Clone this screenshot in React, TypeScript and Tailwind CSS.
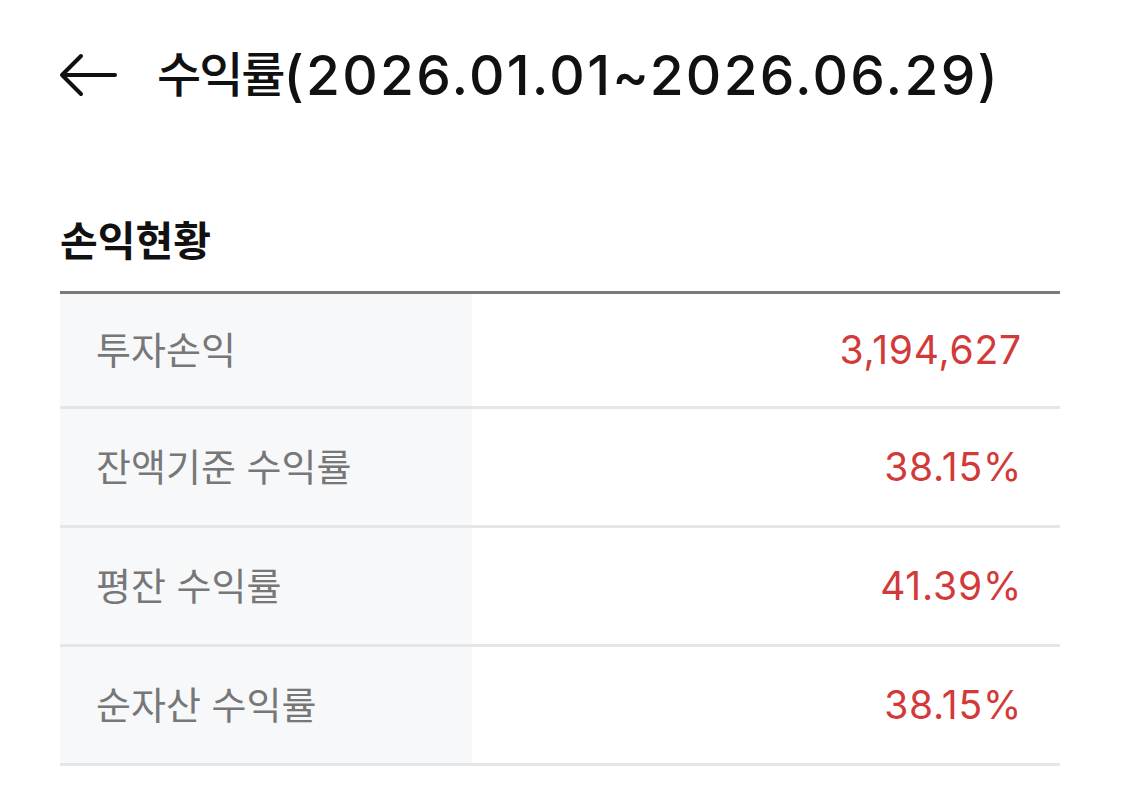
import React from 'react';

type Row = { label: string; value: string };

const rows: Row[] = [
  { label: '투자손익', value: '3,194,627' },
  { label: '잔액기준 수익률', value: '38.15%' },
  { label: '평잔 수익률', value: '41.39%' },
  { label: '순자산 수익률', value: '38.15%' },
];

const BackArrow = () => (
  <svg width="58" height="44" viewBox="0 0 58 44" fill="none">
    <path d="M56 22H4M22 3L3 22l19 19" stroke="#111" strokeWidth="4" strokeLinecap="round" strokeLinejoin="round" />
  </svg>
);

const App = () => {
  return (
    <div className="min-h-screen w-[1125px] bg-white font-['Inter','Noto_Sans_CJK_KR',sans-serif]">
      <header className="flex h-[150px] items-center pl-[59px]">
        <BackArrow />
        <h1 className="ml-[40px] flex items-center font-medium leading-none text-[#111]">
          <span className="text-[48px] tracking-[-2px]">수익률</span>
          <span className="text-[55px] tracking-[2.3px]">(2026.01.01~2026.06.29)</span>
        </h1>
      </header>

      <section className="ml-[60px] w-[1000px] pt-[66px]">
        <h2 className="text-[41px] font-bold leading-[50px] text-[#111]">손익현황</h2>

        <div className="mt-[25px] border-t-[3px] border-[#7a7a7a]">
          {rows.map((row, i) => (
            <div
              key={row.label}
              className={`flex border-b-[3px] border-[#e6e6e8] ${i === 0 ? 'h-[115px]' : 'h-[119px]'}`}
            >
              <div className="flex w-[412px] items-center bg-[#f7f8fa] pl-[36px] text-[38px] text-[#777777]">
                {row.label}
              </div>
              <div className="flex flex-1 items-center justify-end pr-[38px] text-[39px] tracking-[0.8px] text-[#d23a3a]">
                {row.value}
              </div>
            </div>
          ))}
        </div>
      </section>
    </div>
  );
};

export default App;
